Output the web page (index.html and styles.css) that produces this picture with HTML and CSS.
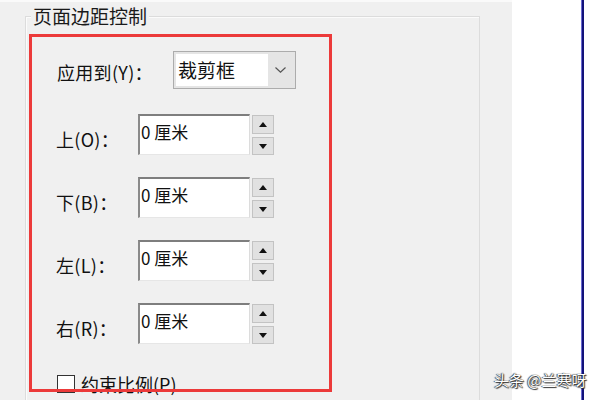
FILE: index.html
```html
<!DOCTYPE html>
<html lang="zh-CN">
<head>
<meta charset="utf-8">
<title>页面边距控制</title>
<link rel="stylesheet" href="styles.css">
</head>
<body>
<div class="screen">
  <div class="panel">
    <div class="group">
      <div class="group-title">页面边距控制</div>
      <div class="form">
        <div class="row row-select">
          <span class="label label-wide">应用到(Y)：</span>
          <div class="select">
            <span class="select-field">裁剪框</span>
            <span class="select-btn">
              <svg width="11" height="6" viewBox="0 0 11 6"><path d="M0.5 0.5 L5.5 5.2 L10.5 0.5" fill="none" stroke="#555" stroke-width="1.2"/></svg>
            </span>
          </div>
        </div>
        <div class="row spin-row">
          <span class="label">上(O)：</span>
          <div class="spin-input">0 厘米</div>
          <div class="spin-btns">
            <span class="spin-btn up"><svg width="8" height="5" viewBox="0 0 8 5"><polygon points="4,0 8,5 0,5" fill="#111"/></svg></span>
            <span class="spin-btn down"><svg width="8" height="5" viewBox="0 0 8 5"><polygon points="0,0 8,0 4,5" fill="#111"/></svg></span>
          </div>
        </div>
        <div class="row spin-row">
          <span class="label">下(B)：</span>
          <div class="spin-input">0 厘米</div>
          <div class="spin-btns">
            <span class="spin-btn up"><svg width="8" height="5" viewBox="0 0 8 5"><polygon points="4,0 8,5 0,5" fill="#111"/></svg></span>
            <span class="spin-btn down"><svg width="8" height="5" viewBox="0 0 8 5"><polygon points="0,0 8,0 4,5" fill="#111"/></svg></span>
          </div>
        </div>
        <div class="row spin-row">
          <span class="label">左(L)：</span>
          <div class="spin-input">0 厘米</div>
          <div class="spin-btns">
            <span class="spin-btn up"><svg width="8" height="5" viewBox="0 0 8 5"><polygon points="4,0 8,5 0,5" fill="#111"/></svg></span>
            <span class="spin-btn down"><svg width="8" height="5" viewBox="0 0 8 5"><polygon points="0,0 8,0 4,5" fill="#111"/></svg></span>
          </div>
        </div>
        <div class="row spin-row">
          <span class="label">右(R)：</span>
          <div class="spin-input">0 厘米</div>
          <div class="spin-btns">
            <span class="spin-btn up"><svg width="8" height="5" viewBox="0 0 8 5"><polygon points="4,0 8,5 0,5" fill="#111"/></svg></span>
            <span class="spin-btn down"><svg width="8" height="5" viewBox="0 0 8 5"><polygon points="0,0 8,0 4,5" fill="#111"/></svg></span>
          </div>
        </div>
        <div class="row check-row">
          <span class="checkbox"></span>
          <span class="check-text">约束比例(P)</span>
        </div>
      </div>
    </div>
  </div>
  <div class="side"><div class="vline"></div></div>
  <div class="highlight"></div>
  <div class="watermark">头条 @兰寒呀</div>
</div>
</body>
</html>
```

FILE: styles.css
```css
* { box-sizing: border-box; }
html, body { margin: 0; padding: 0; background: #fff; }
body {
  font-family: "Noto Sans CJK SC", "Noto Sans", sans-serif;
  color: #111;
}
.screen {
  position: relative;
  display: flex;
  width: 600px;
  height: 400px;
  overflow: hidden;
}
.panel {
  width: 512px;
  height: 400px;
  background: #f0f0f0;
  border-top: 2px solid #fafafa;
}
.group {
  position: relative;
  margin: 14px 0 0 25px;
  width: 455px;
  height: 400px;
  border: 1px solid #dcdcdc;
  box-shadow: inset 1px 1px 0 #fbfbfb;
}
.group-title {
  position: absolute;
  top: -12px;
  left: 5px;
  padding: 0 2px;
  background: #f0f0f0;
  font-size: 19px;
  line-height: 22px;
  color: #1a1a1a;
}
.form {
  display: flex;
  flex-direction: column;
  gap: 22px;
  padding: 34px 0 0 30px;
}
.row { display: flex; }
.label {
  width: 82px;
  font-size: 18px;
  line-height: 24px;
  padding-top: 13px;
  white-space: nowrap;
  letter-spacing: 0.3px;
}
.row-select {
  height: 38px;
  align-items: center;
  margin-bottom: 3px;
}
.label-wide {
  width: 117px;
  padding-top: 3px;
  padding-left: 1px;
}
.select {
  display: flex;
  width: 123px;
  height: 38px;
  padding: 2px;
  border: 1px solid #acacac;
  background: #e5e5e5;
}
.select-field {
  width: 92px;
  background: #fff;
  font-size: 19px;
  line-height: 32px;
  padding-left: 2px;
}
.select-btn {
  flex: 1;
  display: flex;
  align-items: center;
  justify-content: center;
}
.spin-row {
  height: 41px;
  align-items: flex-start;
}
.spin-input {
  width: 112px;
  height: 41px;
  background: #fff;
  border-top: 2px solid #7e7e7e;
  border-left: 2px solid #8a8a8a;
  border-right: 1px solid #dcdcdc;
  border-bottom: 1px solid #e6e6e6;
  padding: 4px 0 0 1px;
  font-size: 17px;
  line-height: 24px;
}
.spin-btns {
  display: flex;
  flex-direction: column;
  gap: 3px;
  width: 22px;
  margin: 1px 0 0 2px;
}
.spin-btn {
  display: flex;
  align-items: center;
  justify-content: center;
  height: 19px;
  background: #e1e1e1;
  border: 1px solid #c3c3c3;
}
.spin-btn.down { height: 18px; }
.check-row {
  align-items: center;
  gap: 6px;
  margin-top: 6px;
  padding-left: 1px;
}
.checkbox {
  width: 18px;
  height: 18px;
  border: 1px solid #333;
  background: #fff;
}
.check-text {
  font-size: 18px;
  line-height: 24px;
}
.side {
  flex: 1;
  background: #fff;
}
.vline {
  width: 3px;
  height: 100%;
  margin-left: 69px;
  background: linear-gradient(to right, #6a6ad0 0 1px, #12127a 1px);
}
.highlight {
  position: absolute;
  left: 29px;
  top: 34px;
  width: 303px;
  height: 358px;
  border: 3px solid #ec3a3a;
}
.watermark {
  position: absolute;
  left: 494px;
  top: 370px;
  font-size: 15px;
  line-height: 20px;
  color: #fff;
  white-space: nowrap;
  text-shadow: 0 0 1px #000, 1px 1px 1px #333, -1px 0 1px #555;
}
```
